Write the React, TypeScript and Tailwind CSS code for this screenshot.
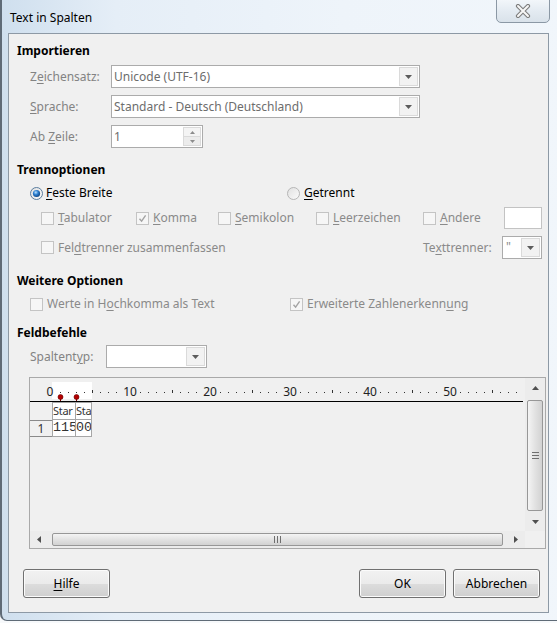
import type { ReactNode } from 'react';

// mnemonic letter, underlined like a Windows access key
function Mn({ children }: { children: ReactNode }) {
  return <span className="underline decoration-1 underline-offset-[2px]">{children}</span>;
}

function DropArrow() {
  return (
    <svg width="7" height="4" viewBox="0 0 7 4">
      <path d="M0 0h7L3.5 4z" fill="#5c5c5c" />
    </svg>
  );
}

function Combo({ value, className }: { value?: string; className: string }) {
  return (
    <div className={`flex h-[23px] border border-[#ababab] bg-white ${className}`}>
      <div className="flex flex-1 items-center overflow-hidden whitespace-nowrap pl-[2px] text-[#6d6d6d]">
        {value}
      </div>
      <div className="m-px flex w-[19px] items-center justify-center border border-[#dadada] bg-[#f2f2f2]">
        <DropArrow />
      </div>
    </div>
  );
}

function CheckBox({ checked }: { checked?: boolean }) {
  return (
    <span className="flex h-[13px] w-[13px] shrink-0 items-center justify-center border border-[#c4c4c4] bg-[#f6f6f6]">
      {checked && (
        <svg width="9" height="9" viewBox="0 0 9 9">
          <path d="M1.5 4.8 3.6 7.2 7.6 1.4" fill="none" stroke="#a3a3a3" strokeWidth="1.4" />
        </svg>
      )}
    </span>
  );
}

function Radio({ on }: { on?: boolean }) {
  return (
    <svg width="13" height="13" viewBox="0 0 13 13" className="shrink-0">
      <defs>
        <radialGradient id="dot" cx="0.4" cy="0.35" r="0.7">
          <stop offset="0" stopColor="#b9e2ff" />
          <stop offset="0.45" stopColor="#2c7fd0" />
          <stop offset="1" stopColor="#0b3f7c" />
        </radialGradient>
        <linearGradient id="ring" x1="0" y1="0" x2="1" y2="1">
          <stop offset="0" stopColor="#e0e0e0" />
          <stop offset="1" stopColor="#fbfbfb" />
        </linearGradient>
      </defs>
      <circle cx="6.5" cy="6.5" r="6" fill="url(#ring)" stroke={on ? '#5a7d9e' : '#b5b5b5'} />
      {on && <circle cx="6.5" cy="6.5" r="3.6" fill="url(#dot)" />}
    </svg>
  );
}

function Option({ checked, children, className }: { checked?: boolean; children: ReactNode; className: string }) {
  return (
    <div className={`flex items-center gap-[4px] text-[#8a8a8a] ${className}`}>
      <CheckBox checked={checked} />
      <span className="whitespace-nowrap">{children}</span>
    </div>
  );
}

function PushButton({ children }: { children: ReactNode }) {
  return (
    <div className="flex h-[29px] w-[87px] items-center justify-center rounded-[3px] border border-[#707070] bg-[linear-gradient(#f2f2f2_0%,#ebebeb_50%,#dddddd_50%,#cfcfcf_100%)] text-black shadow-[inset_0_0_0_1px_#fbfbfb]">
      {children}
    </div>
  );
}

function Ruler() {
  const marks = [];
  for (let n = 1; n <= 58; n++) {
    // no mark under the numbers themselves
    if (n % 10 === 0 || n % 10 === 9) continue;
    const x = 22 + n * 8;
    marks.push(
      n % 5 === 0 ? (
        <rect key={n} x={x} y={12} width={1} height={3} fill="#333" />
      ) : (
        <rect key={n} x={x} y={14} width={1} height={1} fill="#333" />
      ),
    );
  }
  return (
    <svg width="495" height="24" viewBox="0 0 495 24" className="block shrink-0">
      <rect x="22" y="4" width="40" height="17" fill="#ffffff" />
      {marks}
      {[0, 10, 20, 30, 40, 50].map((n) => (
        <text
          key={n}
          x={20 + n * 8}
          y={18}
          textAnchor="middle"
          fontSize="12"
          fontFamily="Noto Sans, sans-serif"
          fill="#222"
        >
          {n}
        </text>
      ))}
      {[30, 46].map((x) => (
        <g key={x}>
          <rect x={x} y={20} width={1} height={3} fill="#7a0000" />
          <circle cx={x + 0.5} cy={19} r={2.5} fill="#b40000" stroke="#6a0000" strokeWidth="0.6" />
        </g>
      ))}
      <rect x="0" y="23" width="493" height="1" fill="#000" />
    </svg>
  );
}

function Tri({ dir }: { dir: 'up' | 'down' | 'left' | 'right' }) {
  const d = {
    up: 'M0 4h7L3.5 0z',
    down: 'M0 0h7L3.5 4z',
    left: 'M4 0v7L0 3.5z',
    right: 'M0 0v7L4 3.5z',
  }[dir];
  const vertical = dir === 'up' || dir === 'down';
  return (
    <svg width={vertical ? 7 : 4} height={vertical ? 4 : 7} viewBox={vertical ? '0 0 7 4' : '0 0 4 7'}>
      <path d={d} fill="#4f4f4f" />
    </svg>
  );
}

function Preview() {
  return (
    <div className="mt-[9px] ml-[20px] flex h-[172px] w-[517px] border border-[#a9a9a9] bg-[#f0f0f0]">
      <div className="flex w-[495px] flex-col">
        <div className="flex flex-1 flex-col">
          <Ruler />
          {/* header row */}
          <div className="flex h-[18px] text-[11px] leading-[16px] tracking-[-0.3px] text-[#333]">
            <div className="w-[22px]" />
            <div className="w-[24px] overflow-hidden whitespace-nowrap border border-[#a6a6a6] bg-white">Star</div>
            <div className="w-[16px] overflow-hidden whitespace-nowrap border-y border-r border-[#a6a6a6] bg-white">
              Sta
            </div>
          </div>
          {/* first data row */}
          <div className="flex h-[17px] font-['Liberation_Mono',monospace] text-[13.33px] leading-[15px] text-[#333]">
            <div className="flex w-[22px] items-center justify-center border-y border-[#8a8a8a] font-['Noto_Sans',sans-serif] text-[12px]">
              1
            </div>
            <div className="w-[24px] overflow-hidden border-x border-b border-[#a6a6a6] bg-white">115</div>
            <div className="w-[16px] overflow-hidden border-r border-b border-[#a6a6a6] bg-white">00</div>
          </div>
        </div>
        {/* horizontal scrollbar */}
        <div className="flex h-[17px] bg-[#ececec]">
          <div className="flex w-[18px] items-center justify-center">
            <Tri dir="left" />
          </div>
          <div className="flex flex-1 px-[4px] py-[2px]">
            <div className="flex flex-1 items-center justify-center rounded-[2px] border border-[#979797] bg-[linear-gradient(#f4f4f4,#e2e2e2_50%,#d2d2d2)]">
              <div className="flex gap-[2px]">
                <span className="h-[7px] w-px bg-[#6e6e6e]" />
                <span className="h-[7px] w-px bg-[#6e6e6e]" />
                <span className="h-[7px] w-px bg-[#6e6e6e]" />
              </div>
            </div>
          </div>
          <div className="flex w-[18px] items-center justify-center">
            <Tri dir="right" />
          </div>
        </div>
      </div>
      {/* vertical scrollbar */}
      <div className="flex w-[20px] flex-col">
        <div className="flex flex-1 flex-col bg-[#ececec]">
          <div className="flex h-[20px] items-center justify-center">
            <Tri dir="up" />
          </div>
          <div className="flex flex-1 px-[2px] py-[2px]">
            <div className="flex flex-1 flex-col items-center justify-center rounded-[2px] border border-[#979797] bg-[linear-gradient(90deg,#f4f4f4,#e2e2e2_50%,#d2d2d2)]">
              <div className="flex flex-col gap-[2px]">
                <span className="h-px w-[7px] bg-[#6e6e6e]" />
                <span className="h-px w-[7px] bg-[#6e6e6e]" />
                <span className="h-px w-[7px] bg-[#6e6e6e]" />
              </div>
            </div>
          </div>
          <div className="flex h-[18px] items-center justify-center">
            <Tri dir="down" />
          </div>
        </div>
        <div className="h-[17px] bg-[#f0f0f0]" />
      </div>
    </div>
  );
}

export default function App() {
  return (
    <div className="h-[623px] w-[557px] overflow-hidden bg-[#f7f9fb] font-['Noto_Sans',sans-serif] text-[12px] leading-[16px]">
      <div className="relative h-[621px] w-[570px] rounded-bl-[7px] border-b border-l-2 border-[#5f6b77] bg-[linear-gradient(90deg,#cfdfee_0%,#e5eef7_20%,#eef4fa_60%,#f1f6fb_100%)]">
        {/* title bar */}
        <div className="flex h-[33px] items-center pt-[3px] pl-[8px] text-black">Text in Spalten</div>
        <div className="absolute top-[-4px] left-[494px] flex h-[27px] w-[54px] items-center justify-center rounded-b-[5px] border border-[#8b98a5] bg-[linear-gradient(#f6f9fc,#e4ebf2_55%,#d9e2ea)] pt-[3px]">
          <svg width="16" height="14" viewBox="0 0 16 14">
            <path d="M3 2l10 10M13 2 3 12" stroke="#7d7d7d" strokeWidth="4.2" strokeLinecap="round" />
            <path d="M3 2l10 10M13 2 3 12" stroke="#f7f7f7" strokeWidth="2" strokeLinecap="round" />
          </svg>
        </div>

        {/* client area */}
        <div className="ml-[6px] flex h-[580px] w-[541px] flex-col border border-[#8d99a5] bg-[#f0f0f0]">
          <div className="mt-[9px] ml-[8px] font-bold text-black">Importieren</div>

          <div className="mt-[6px] ml-[21px] flex h-[23px] items-center">
            <div className="w-[81px] text-[#838383]">
              Z<Mn>e</Mn>ichensatz:
            </div>
            <Combo value="Unicode (UTF-16)" className="w-[309px]" />
          </div>
          <div className="mt-[7px] ml-[21px] flex h-[23px] items-center">
            <div className="w-[81px] text-[#838383]">
              <Mn>S</Mn>prache:
            </div>
            <Combo value="Standard - Deutsch (Deutschland)" className="w-[309px]" />
          </div>
          <div className="mt-[7px] ml-[21px] flex h-[23px] items-center">
            <div className="w-[81px] text-[#838383]">
              Ab <Mn>Z</Mn>eile:
            </div>
            <div className="flex h-[23px] w-[92px] border border-[#ababab] bg-white">
              <div className="flex flex-1 items-center pl-[2px] text-[#6d6d6d]">1</div>
              <div className="m-px flex w-[18px] flex-col border border-[#dadada]">
                <div className="flex flex-1 items-center justify-center border-b border-[#dadada] bg-[#f4f4f4]">
                  <svg width="5" height="3" viewBox="0 0 5 3">
                    <path d="M0 3h5L2.5 0z" fill="#8c8c8c" />
                  </svg>
                </div>
                <div className="flex flex-1 items-center justify-center bg-[#ececec]">
                  <svg width="5" height="3" viewBox="0 0 5 3">
                    <path d="M0 0h5L2.5 3z" fill="#8c8c8c" />
                  </svg>
                </div>
              </div>
            </div>
          </div>

          <div className="mt-[14px] ml-[8px] font-bold text-black">Trennoptionen</div>
          <div className="mt-[7px] ml-[21px] flex h-[16px] items-center text-black">
            <div className="flex w-[257px] items-center gap-[3px]">
              <Radio on />
              <span>
                <Mn>F</Mn>este Breite
              </span>
            </div>
            <div className="flex items-center gap-[4px]">
              <Radio />
              <span>
                <Mn>G</Mn>etrennt
              </span>
            </div>
          </div>
          <div className="mt-[6px] ml-[32px] flex h-[22px] items-center">
            <Option className="w-[95px]">
              <Mn>T</Mn>abulator
            </Option>
            <Option checked className="w-[82px]">
              <Mn>K</Mn>omma
            </Option>
            <Option className="w-[98px]">
              <Mn>S</Mn>emikolon
            </Option>
            <Option className="w-[107px]">
              <Mn>L</Mn>eerzeichen
            </Option>
            <Option className="w-[81px]">
              <Mn>A</Mn>ndere
            </Option>
            <div className="h-[22px] w-[38px] border border-[#c3c3c3] bg-white" />
          </div>
          <div className="mt-[7px] ml-[32px] flex h-[23px] items-center">
            <Option className="w-[382px]">
              Fel<Mn>d</Mn>trenner zusammenfassen
            </Option>
            <div className="w-[79px] text-[#8a8a8a]">
              Te<Mn>x</Mn>ttrenner:
            </div>
            <div className="flex h-[23px] w-[40px] border border-[#ababab] bg-white">
              <div className="flex-1 pt-[2px] pl-[3px] text-[#8a8a8a]">"</div>
              <div className="m-px flex w-[19px] items-center justify-center border border-[#dadada] bg-[#f2f2f2]">
                <DropArrow />
              </div>
            </div>
          </div>

          <div className="mt-[14px] ml-[8px] font-bold text-black">Weitere Optionen</div>
          <div className="mt-[7px] ml-[21px] flex h-[16px] items-center">
            <Option className="w-[260px]">
              Werte in H<Mn>o</Mn>chkomma als Text
            </Option>
            <Option checked className="">
              Erweiterte Zahlenerkenn<Mn>u</Mn>ng
            </Option>
          </div>

          <div className="mt-[13px] ml-[8px] font-bold text-black">Feldbefehle</div>
          <div className="mt-[4px] ml-[21px] flex h-[23px] items-center">
            <div className="w-[76px] text-[#838383]">
              Spaltent<Mn>y</Mn>p:
            </div>
            <Combo className="w-[101px]" />
          </div>

          <Preview />

          <div className="mt-[20px] flex items-center pr-[8px] pl-[14px]">
            <PushButton>
              <Mn>H</Mn>ilfe
            </PushButton>
            <div className="flex-1" />
            <PushButton>OK</PushButton>
            <div className="w-[7px]" />
            <PushButton>Abbrechen</PushButton>
          </div>
        </div>
      </div>
    </div>
  );
}
